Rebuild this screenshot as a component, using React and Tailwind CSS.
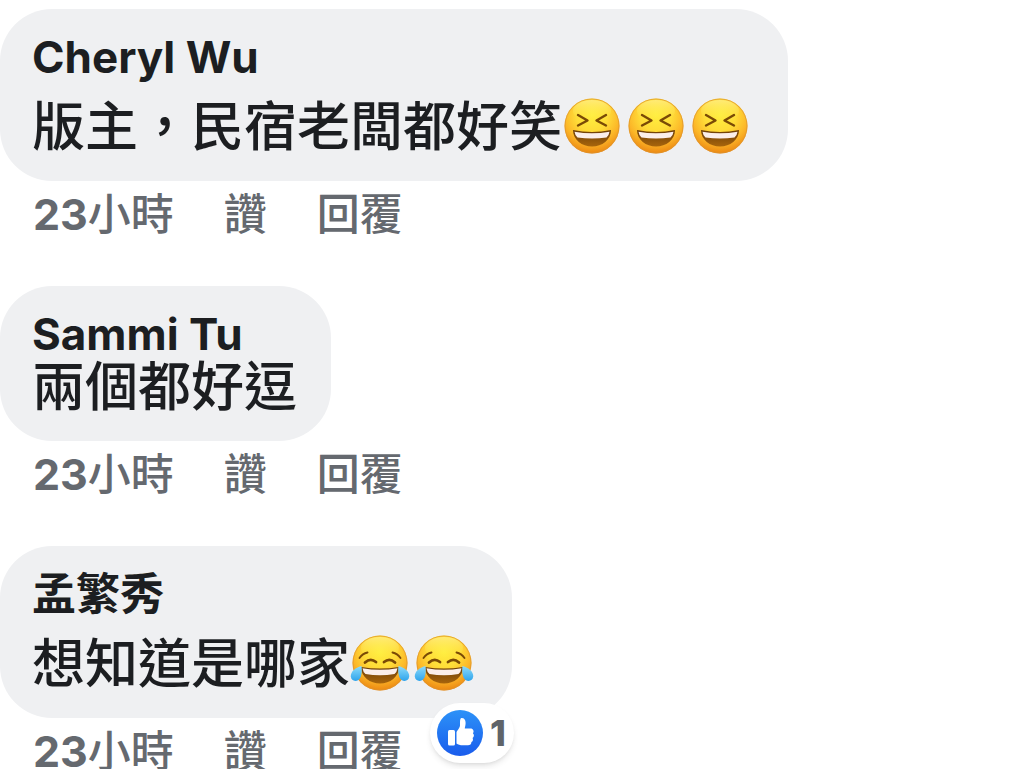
import React from 'react';

const comments = [
  { id: 1, author: 'Cheryl Wu', text: '版主，民宿老闆都好笑', emoji: 'laugh', emojiCount: 3, hours: 23, likes: 0 },
  { id: 2, author: 'Sammi Tu', text: '兩個都好逗', emoji: null, emojiCount: 0, hours: 23, likes: 0 },
  { id: 3, author: '孟繁秀', text: '想知道是哪家', emoji: 'tears', emojiCount: 2, hours: 23, likes: 1 },
];

// Shared gradients for the emoji and the like badge
const Gradients = () => (
  <svg width="0" height="0" className="absolute" aria-hidden="true">
    <defs>
      <radialGradient id="face" cx="0.5" cy="0.3" r="0.72">
        <stop offset="0" stopColor="#ffee3e" />
        <stop offset="0.4" stopColor="#ffdc38" />
        <stop offset="0.7" stopColor="#fcb728" />
        <stop offset="1" stopColor="#ea8210" />
      </radialGradient>
      <linearGradient id="shine" x1="0" y1="0" x2="0" y2="1">
        <stop offset="0" stopColor="#fff3a0" stopOpacity="0.6" />
        <stop offset="1" stopColor="#ffee3e" stopOpacity="0" />
      </linearGradient>
      <linearGradient id="mouth" x1="0" y1="0" x2="0" y2="1">
        <stop offset="0" stopColor="#6b3d08" />
        <stop offset="1" stopColor="#a8650c" />
      </linearGradient>
      <linearGradient id="tear" x1="0" y1="0" x2="0" y2="1">
        <stop offset="0" stopColor="#8ddcfb" />
        <stop offset="1" stopColor="#2fa4ec" />
      </linearGradient>
      <linearGradient id="like" x1="0" y1="0" x2="0" y2="1">
        <stop offset="0" stopColor="#2c92f8" />
        <stop offset="1" stopColor="#1a5cec" />
      </linearGradient>
    </defs>
  </svg>
);

const Face = () => (
  <>
    <circle cx="30" cy="31" r="27.5" fill="url(#face)" />
    <circle cx="30" cy="31" r="27" fill="none" stroke="#dc9430" strokeOpacity="0.7" />
    <ellipse cx="30" cy="16" rx="19" ry="11" fill="url(#shine)" />
  </>
);

const LaughEmoji = () => (
  <svg viewBox="0 0 64 64" className="size-16 shrink-0" role="img" aria-label="😆">
    <Face />
    <g fill="none" stroke="#7a4a06" strokeWidth="2.4" strokeLinecap="round" strokeLinejoin="round">
      <path d="M16 20 L25.5 25.5 L16 30.5" />
      <path d="M44 20 L34.5 25.5 L44 30.5" />
    </g>
    <path d="M11 35 Q30 39 49 35 C49 45 40 51.5 30 51.5 C20 51.5 11 45 11 35 Z" fill="url(#mouth)" />
    <path d="M12.5 36.700 Q30 40 47.5 36.700 Q47 40.500 44.500 42.500 Q30 44.500 15.500 42.500 Q13 40.500 12.5 36.700 Z" fill="#fbeeea" />
  </svg>
);

const TearsEmoji = () => (
  <svg viewBox="0 0 64 64" className="size-16 shrink-0" role="img" aria-label="😂">
    <Face />
    <g fill="none" stroke="#7a4a06" strokeLinecap="round">
      <path d="M9.500 26 Q12.500 21.500 17.500 20.500" strokeWidth="1.900" />
      <path d="M50.500 26 Q47.500 21.500 42.500 20.500" strokeWidth="1.900" />
      <path d="M15 30.500 Q20.500 25.500 26 30" strokeWidth="2.800" />
      <path d="M45 30.500 Q39.500 25.500 34 30" strokeWidth="2.800" />
    </g>
    <path d="M11 35 Q30 38 49 35 C49 45 40 51.500 30 51.500 C20 51.500 11 45 11 35 Z" fill="url(#mouth)" />
    <path d="M12.500 36.300 Q30 39.300 47.500 36.300 Q47 40 44.500 42 Q30 44.500 15.500 42 Q13 40 12.500 36.300 Z" fill="#fbeeea" />
    <path d="M11.500 34 C5 35.500 0.500 40 0.800 44.500 C1.200 50 8.500 50.500 10.700 45 C12 41.500 12 37.500 11.500 34 Z" fill="url(#tear)" />
    <path d="M48.500 34 C55 35.500 59.500 40 59.200 44.500 C58.800 50 51.500 50.500 49.300 45 C48 41.500 48 37.500 48.500 34 Z" fill="url(#tear)" />
  </svg>
);

const LikeIcon = () => (
  <svg viewBox="0 0 48 48" className="size-12" aria-hidden="true">
    <circle cx="24" cy="24" r="23" fill="url(#like)" />
    <rect x="12" y="21" width="7" height="15.500" rx="1.500" fill="#fff" />
    <path d="M20.500 23.500 C20.500 22 23.500 20 24 16.500 C24.200 14 23.500 9.500 25.500 9 C28.800 8.600 29.800 12 29.600 14.500 C29.500 16.500 28.800 18.500 28.800 19.500 L34.500 19.500 C37.200 19.500 38.500 22.300 36.900 24.200 C38.500 25.800 38.100 28 36.600 28.900 C37.500 30.700 36.800 32.500 35.400 33 C35.600 35 34 36.300 32 36.300 L27 36.300 C24 36.300 22 35.500 20.500 34.500 Z" fill="#fff" />
  </svg>
);

const Comment = ({ comment }) => {
  const Emoji = comment.emoji === 'laugh' ? LaughEmoji : TearsEmoji;

  return (
    <article className="flex flex-col items-start">
      <div className="relative bg-[#eff0f2] rounded-[52px] pl-8 pr-[34px] pt-6 pb-[25px] text-[#1c1e21]">
        <h2 className="text-[44px] leading-[48px] font-bold">{comment.author}</h2>
        <div className={`flex items-center h-[58px] ${comment.emojiCount > 0 ? 'mt-[17px]' : ''}`}>
          <p className="text-[53px] leading-[58px] font-medium whitespace-nowrap">{comment.text}</p>
          {Array.from({ length: comment.emojiCount }, (_, i) => (
            <Emoji key={i} />
          ))}
        </div>

        {comment.likes > 0 && (
          <button
            aria-label={`${comment.likes} 個讚`}
            className="absolute -right-0.5 -bottom-[45px] h-[60px] pl-1.5 pr-2 flex items-center gap-1.5 bg-white rounded-full shadow-md text-[36px] font-extrabold text-[#606469]"
          >
            <LikeIcon />
            <span>{comment.likes}</span>
          </button>
        )}
      </div>

      {/* Comment actions */}
      <div className="flex gap-[50px] pl-[33px] h-[66px] items-center text-[43px] leading-[48px] font-medium text-[#65696f]">
        <a href="#" className="whitespace-nowrap">
          <span className="font-bold">{comment.hours}</span>小時
        </a>
        <button>讚</button>
        <button>回覆</button>
      </div>
    </article>
  );
};

const App = () => {
  return (
    <main className="h-screen overflow-hidden bg-white pt-[9px] flex flex-col gap-[39px] font-[Inter,'Noto_Sans_CJK_TC',sans-serif]">
      <Gradients />
      {comments.map((comment) => (
        <Comment key={comment.id} comment={comment} />
      ))}
    </main>
  );
};

export default App;
